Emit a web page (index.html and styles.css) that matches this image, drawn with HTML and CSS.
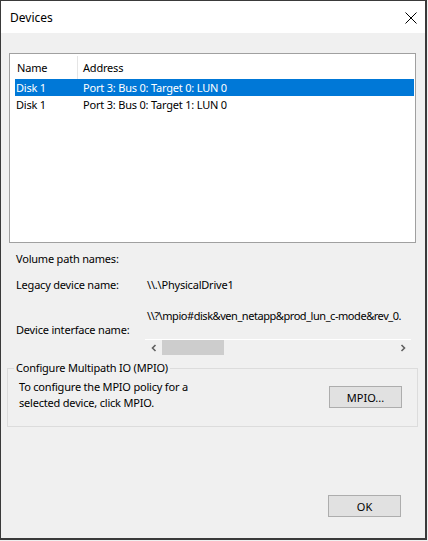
FILE: index.html
```html
<!DOCTYPE html>
<html lang="en">
<head>
    <meta charset="UTF-8">
    <meta name="viewport" content="width=device-width, initial-scale=1.0">
    <title>Devices</title>
    <link rel="stylesheet" href="styles.css">
</head>
<body>
    <div class="window">
        <div class="titlebar">
            <span class="title">Devices</span>
            <svg class="close" width="12" height="12" viewBox="0 0 12 12">
                <path d="M0.5 0.5 L11.5 11.5 M11.5 0.5 L0.5 11.5" stroke="#000" stroke-width="1" fill="none"/>
            </svg>
        </div>
        <div class="content">
            <div class="listbox">
                <div class="list-head">
                    <div class="col-name">Name</div>
                    <div class="col-addr">Address</div>
                </div>
                <div class="row selected">
                    <div class="col-name">Disk 1</div>
                    <div class="col-addr">Port 3: Bus 0: Target 0: LUN 0</div>
                </div>
                <div class="row">
                    <div class="col-name">Disk 1</div>
                    <div class="col-addr">Port 3: Bus 0: Target 1: LUN 0</div>
                </div>
            </div>

            <div class="details">
                <div class="vol">Volume path names:</div>
                <div class="field legacy">
                    <span class="label">Legacy device name:</span>
                    <span class="value">\\.\PhysicalDrive1</span>
                </div>
                <div class="field iface">
                    <span class="label">Device interface name:</span>
                    <div class="iface-value">
                        <div class="value long">\\?\mpio#disk&amp;ven_netapp&amp;prod_lun_c-mode&amp;rev_0.</div>
                        <div class="hscroll">
                            <div class="arrow">
                                <svg width="8" height="8" viewBox="0 0 8 8"><path d="M5.5 1 L2.5 4 L5.5 7" stroke="#606060" stroke-width="1.6" fill="none"/></svg>
                            </div>
                            <div class="track"><div class="thumb"></div></div>
                            <div class="arrow">
                                <svg width="8" height="8" viewBox="0 0 8 8"><path d="M2.5 1 L5.5 4 L2.5 7" stroke="#606060" stroke-width="1.6" fill="none"/></svg>
                            </div>
                        </div>
                    </div>
                </div>
            </div>

            <fieldset class="group">
                <legend>Configure Multipath IO (MPIO)</legend>
                <div class="group-body">
                    <p>To configure the MPIO policy for a<br>selected device, click MPIO.</p>
                    <button class="btn">MPIO...</button>
                </div>
            </fieldset>

            <div class="footer">
                <button class="btn">OK</button>
            </div>
        </div>
    </div>
</body>
</html>
```

FILE: styles.css
```css
body {
    margin: 0;
    font-family: "Noto Sans", "Liberation Sans", sans-serif;
    font-size: 11px;
    letter-spacing: -0.2px;
    color: #000;
    background-color: #f0f0f0;
}

.window {
    box-sizing: border-box;
    width: 427px;
    height: 540px;
    border: 1px solid #3a3a3a;
    border-right-width: 2px;
    border-bottom-width: 2px;
    background-color: #f0f0f0;
    display: flex;
    flex-direction: column;
}

.titlebar {
    height: 32px;
    flex-shrink: 0;
    background-color: #fff;
    display: flex;
    align-items: center;
    justify-content: space-between;
    padding: 0 8px 0 9px;
}

.title {
    font-size: 12px;
    letter-spacing: 0;
}

.close {
    margin-top: 1px;
}

.content {
    flex: 1;
    display: flex;
    flex-direction: column;
    padding: 20px 0 0 8px;
}

.listbox {
    box-sizing: border-box;
    width: 407px;
    height: 190px;
    background-color: #fff;
    border: 1px solid #a0a0a0;
    padding: 0 1px 0 5px;
}

.list-head,
.row {
    display: flex;
    align-items: center;
    height: 17px;
    line-height: 17px;
}

.list-head {
    height: 25px;
    align-items: flex-end;
}

.list-head .col-name {
    width: 60px;
    padding-left: 2px;
    border-right: 1px solid #e5e5e5;
    height: 23px;
    line-height: 23px;
}

.list-head .col-addr {
    height: 23px;
    line-height: 23px;
}

.col-name {
    flex-shrink: 0;
}

.col-addr {
    padding-left: 5px;
}

.row .col-name {
    width: 67px;
    padding-left: 1px;
}

.row .col-addr {
    padding-left: 0;
}

.row.selected {
    background-color: #0078d7;
    color: #fff;
}

.details {
    padding: 8px 0 0 7px;
}

.vol,
.field,
.value,
.label {
    line-height: 16px;
}

.vol {
    height: 16px;
}

.field {
    display: flex;
}

.label {
    width: 131px;
    flex-shrink: 0;
}

.legacy {
    margin-top: 10px;
    height: 16px;
}

.iface {
    margin-top: 15px;
    align-items: flex-end;
}

.iface .label {
    margin-bottom: 17px;
}

.iface-value {
    width: 264px;
}

.iface-value .value {
    height: 16px;
    white-space: nowrap;
    margin-bottom: 15px;
}

.value.long {
    letter-spacing: -0.45px;
}

.hscroll {
    box-sizing: border-box;
    display: flex;
    height: 16px;
    border-top: 1px solid #fff;
    margin-left: -2px;
}

.arrow {
    width: 17px;
    height: 15px;
    display: flex;
    align-items: center;
    justify-content: center;
    flex-shrink: 0;
}

.track {
    flex: 1;
    height: 15px;
}

.thumb {
    width: 62px;
    height: 15px;
    background-color: #cdcdcd;
}

.group {
    box-sizing: border-box;
    width: 411px;
    height: 67px;
    margin: 5px 0 0 -2px;
    padding: 0 15px 0 11px;
    border: 1px solid #dcdcdc;
}

.group legend {
    padding: 0 2px;
    margin-left: -5px;
    line-height: 16px;
}

.group-body {
    display: flex;
    justify-content: space-between;
    align-items: flex-start;
}

.group p {
    margin: 3px 0 0 0;
    line-height: 16px;
}

.group .btn {
    margin-top: 10px;
}

.btn {
    font-family: "Noto Sans", "Liberation Sans", sans-serif;
    font-size: 11px;
    width: 73px;
    height: 22px;
    background-color: #e1e1e1;
    border: 1px solid #adadad;
    padding: 0;
    color: #000;
}

.footer {
    margin-top: auto;
    display: flex;
    justify-content: flex-end;
    padding: 0 24px 21px 0;
}
```
